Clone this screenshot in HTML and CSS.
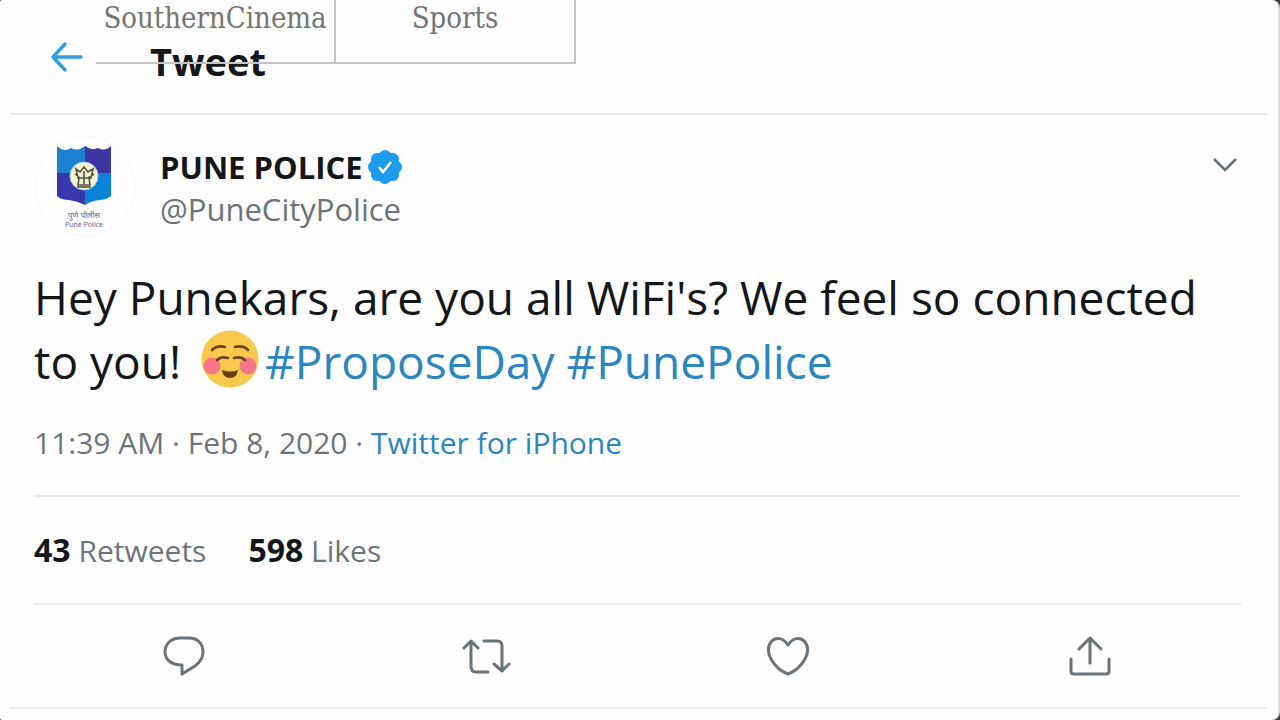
FILE: index.html
```html
<!DOCTYPE html>
<html lang="en">
<head>
<meta charset="utf-8">
<title>Tweet</title>
<link rel="stylesheet" href="styles.css">
</head>
<body>
<main class="card">
  <nav class="tabs" aria-label="Sections">
    <a class="tab" href="#southern">SouthernCinema</a>
    <a class="tab" href="#sports">Sports</a>
  </nav>
  <header class="topbar">
    <button class="icon-btn back" type="button" aria-label="Back">
      <svg width="34" height="32" viewBox="0 0 34 32" fill="none" stroke="#2f9fe0" stroke-width="3.4" stroke-linecap="round" stroke-linejoin="round"><path d="M15 3 3 16l12 13M3 16h28"/></svg>
    </button>
    <h1 class="title">Tweet</h1>
  </header>
  <article class="tweet">
    <div class="author">
      <svg class="avatar" viewBox="0 0 102 102" role="img" aria-label="Pune Police crest">
        <circle cx="51" cy="51" r="50" fill="#fefefe" stroke="#f5f6f7"/>
        <path d="M23 11q7 7 14 2q7 4 14-2v27H23z" fill="#1b80cf"/>
        <path d="M51 11q6 5 13 2q7 4 13-2v29H51z" fill="#3c34a2"/>
        <path d="M23 38h28v32q-8-4-16-5q-8 0-12-4z" fill="#3838ae"/>
        <path d="M51 38h26v23q-5 4-12 4q-8 1-14 5z" fill="#0a83d8"/>
        <circle cx="50" cy="41" r="14" fill="#f2f3d2" stroke="#a8cfd3"/>
        <g fill="none" stroke="#555442" stroke-width="1.6"><path d="M42 34l4 3 4-5 4 5 5-3-2 9H44zM45 43l-1 7h12l-1-7M50 36v13M41 39l5 4M60 39l-6 4"/><path d="M43 52h14"/></g>
        <text class="crest" x="50" y="83" text-anchor="middle">पुणे पोलीस</text>
        <text class="crest crest-en" x="50" y="92" text-anchor="middle">Pune Police</text>
      </svg>
      <div class="names">
        <div class="name"><strong>PUNE POLICE</strong>
          <svg class="badge" viewBox="0 0 36 36" role="img" aria-label="Verified"><g fill="#1d9bec"><circle cx="18" cy="18" r="15"/><circle cx="18" cy="7" r="6"/><circle cx="26" cy="10" r="6"/><circle cx="29" cy="18" r="6"/><circle cx="26" cy="26" r="6"/><circle cx="18" cy="29" r="6"/><circle cx="10" cy="26" r="6"/><circle cx="7" cy="18" r="6"/><circle cx="10" cy="10" r="6"/></g><path d="m12 18 4 5 8-10" fill="none" stroke="#fff" stroke-width="2.6"/></svg>
        </div>
        <div class="handle">@PuneCityPolice</div>
      </div>
      <button class="icon-btn more" type="button" aria-label="More">
        <svg width="26" height="16" viewBox="0 0 26 16" fill="none" stroke="#687078" stroke-width="2.6"><path d="m2 2 11 11L24 2"/></svg>
      </button>
    </div>
    <p class="text">Hey Punekars, are you all WiFi's? We feel so connected to you! <svg class="emoji" viewBox="0 0 58 58" role="img" aria-label="Smiling face"><circle cx="29" cy="29" r="28.5" fill="#f8c94c"/><circle cx="11" cy="36" r="8.5" fill="#f4788a"/><circle cx="47" cy="36" r="8.5" fill="#f4788a"/><g fill="none" stroke="#6b4316" stroke-width="2.6" stroke-linecap="round"><path d="M11 20q5-5 13-3M34 17q8-2 13 3M16 30q4-4 11-2M33 28q7-2 11 2"/></g><path d="M21 40q8 3 16 0q-1 8-8 8t-8-8z" fill="#6b3d10"/></svg><a href="#proposeday">#ProposeDay</a> <a href="#punepolice">#PunePolice</a></p>
    <p class="meta">11:39 AM · Feb 8, 2020 · <a href="#source">Twitter for iPhone</a></p>
    <div class="stats">
      <span><strong>43</strong> Retweets</span>
      <span><strong>598</strong> Likes</span>
    </div>
    <div class="actions">
      <button class="icon-btn" type="button" aria-label="Reply"><svg width="50" height="44" viewBox="0 0 50 44"><path d="M20 4h9c9 0 14 6 14 14 0 6-4 11-8 14l-13 8v-9c-10 0-17-5-17-13C5 10 11 4 20 4z"/></svg></button>
      <button class="icon-btn" type="button" aria-label="Retweet"><svg width="50" height="44" viewBox="0 0 50 44"><path d="M2 14 9 7l7 7M9 7v25q0 6 5 6h12M22 7h13q5 0 5 5v25M32 30l8 7 7-7"/></svg></button>
      <button class="icon-btn" type="button" aria-label="Like"><svg width="50" height="44" viewBox="0 0 50 44"><path d="M25 11C20 3 12 3 8 8c-4 5-3 12 0 17 4 7 11 13 17 15 6-2 13-8 17-15 3-5 4-12 0-17-4-5-12-5-17 3z"/></svg></button>
      <button class="icon-btn" type="button" aria-label="Share"><svg width="50" height="44" viewBox="0 0 50 44"><path d="M25 29V5M14 15 25 4l11 11M6 25v12q0 3 3 3h32q3 0 3-3V25"/></svg></button>
    </div>
  </article>
</main>
</body>
</html>
```

FILE: styles.css
```css
* { box-sizing: border-box; }
body {
  margin: 0;
  background: #404040;
  font-family: "Open Sans", "Noto Sans", sans-serif;
  color: #14171a;
}
a { color: #2a86bd; text-decoration: none; }
p, h1 { margin: 0; font-weight: 400; }
.card {
  position: relative;
  min-height: 100vh;
  padding: 0 11px 0 10px;
  background: #fefefe;
  border-right: 2px solid #dcdcdc;
  border-radius: 2px 8px 8px 2px;
}
.tabs {
  position: absolute;
  top: 0;
  left: 96px;
  display: grid;
  grid-template-columns: 240px 240px;
  height: 64px;
  border-bottom: 2px solid #c4c4c4;
}
.tab {
  border-right: 2px solid #c4c4c4;
  font-family: "DejaVu Serif Condensed", "DejaVu Serif", serif;
  font-size: 29px;
  line-height: 36px;
  text-align: center;
  color: #747474;
}
.topbar {
  display: flex;
  align-items: center;
  gap: 66px;
  height: 115px;
  padding: 0 40px;
  border-bottom: 2px solid #e6e8e9;
}
.title { padding-top: 8px; font-size: 38px; line-height: 48px; font-weight: 700; }
.icon-btn { display: flex; padding: 0; border: 0; background: none; }
.tweet { border-bottom: 2px solid #e9ebec; padding: 20px 26px 0 24px; }
.author { display: flex; gap: 24px; align-items: flex-start; height: 130px; }
.avatar { width: 102px; height: 102px; flex: none; }
.crest { font: 400 8px "Noto Sans", sans-serif; fill: #66619a; }
.crest-en { font-size: 7px; }
.names { flex: 1; padding-top: 11px; }
.name, .handle { font-size: 31px; line-height: 42px; }
.name { display: flex; align-items: center; gap: 4px; }
.badge { width: 36px; height: 36px; }
.handle { color: #6b747b; }
.more { margin: 22px 3px 0 0; }
.text { font-size: 46px; line-height: 64px; }
.emoji { width: 58px; height: 58px; vertical-align: -9px; margin: 0 6px 0 8px; }
.meta { margin-top: 26px; font-size: 30px; line-height: 48px; color: #6b747b; }
.stats {
  display: flex;
  gap: 42px;
  margin-top: 28px;
  padding: 29px 0 28px;
  border: solid #e9ebec;
  border-width: 2px 0;
  font-size: 30px;
  line-height: 48px;
  color: #6b747b;
}
.stats strong { font-size: 32px; color: #14171a; }
.actions {
  display: grid;
  grid-template-columns: repeat(4, 1fr);
  justify-items: center;
  padding: 29px 0;
}
.actions svg { fill: none; stroke: #6b7378; stroke-width: 3; stroke-linecap: round; stroke-linejoin: round; }
```
